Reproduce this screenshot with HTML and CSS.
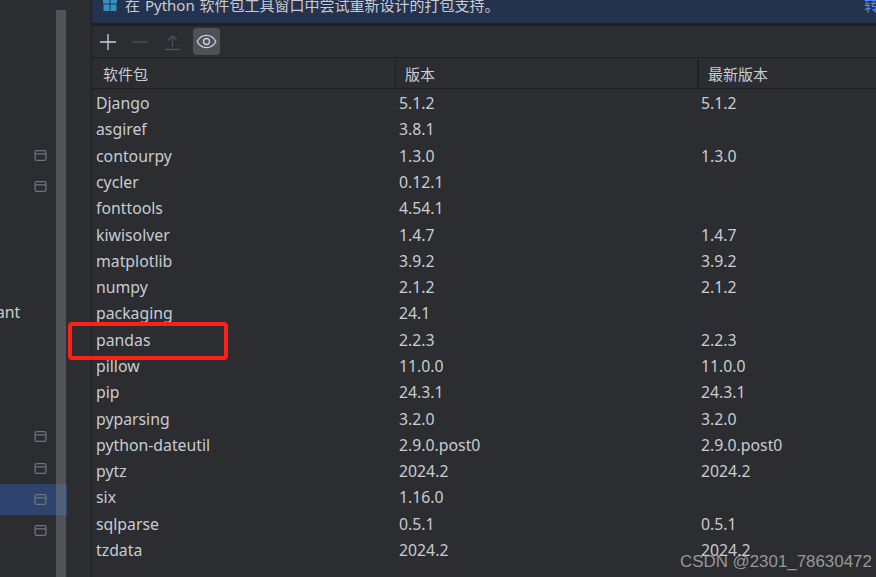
FILE: index.html
```html
<!DOCTYPE html>
<html lang="zh-CN">
<head>
<meta charset="utf-8">
<title>Python Packages</title>
<link rel="stylesheet" href="styles.css">
</head>
<body>
<div class="app">
  <aside class="side">
    <div class="side-list">
      <div class="side-row"><svg class="win" viewBox="0 0 12 12"><rect x="1" y="1.5" width="10" height="9" rx="1.5"/><path d="M1 4.5h10"/></svg></div>
      <div class="side-row"><svg class="win" viewBox="0 0 12 12"><rect x="1" y="1.5" width="10" height="9" rx="1.5"/><path d="M1 4.5h10"/></svg></div>
      <div class="side-row"></div>
      <div class="side-row"></div>
      <div class="side-row"></div>
      <div class="side-row"><span class="side-text">ant</span></div>
      <div class="side-row"></div>
      <div class="side-row"></div>
      <div class="side-row"></div>
      <div class="side-row"><svg class="win" viewBox="0 0 12 12"><rect x="1" y="1.5" width="10" height="9" rx="1.5"/><path d="M1 4.5h10"/></svg></div>
      <div class="side-row"><svg class="win" viewBox="0 0 12 12"><rect x="1" y="1.5" width="10" height="9" rx="1.5"/><path d="M1 4.5h10"/></svg></div>
      <div class="side-row selected"><svg class="win" viewBox="0 0 12 12"><rect x="1" y="1.5" width="10" height="9" rx="1.5"/><path d="M1 4.5h10"/></svg></div>
      <div class="side-row"><svg class="win" viewBox="0 0 12 12"><rect x="1" y="1.5" width="10" height="9" rx="1.5"/><path d="M1 4.5h10"/></svg></div>
    </div>
    <div class="side-scroll"></div>
  </aside>
  <main class="panel">
    <div class="banner">
      <svg class="gift" viewBox="0 0 16 12"><path d="M1 0h6.500v3.500H1zM8.500 0H15v3.500H8.500zM1.500 4.500h6V11h-6zM8.500 4.500h6V11h-6z"/></svg>
      <span class="banner-text">在 Python 软件包工具窗口中尝试重新设计的打包支持。</span>
      <span class="banner-link">转</span>
    </div>
    <div class="toolbar">
      <svg class="tool" viewBox="0 0 18 18"><path class="on" d="M9 1v16M1 9h16"/></svg>
      <svg class="tool" viewBox="0 0 18 18"><path class="off" d="M1 9h16"/></svg>
      <svg class="tool" viewBox="0 0 18 18"><path class="off" d="M2 16.500h15M9.500 14V3M5 7.500 9.500 3 14 7.500"/></svg>
      <span class="tool-active"><svg class="eye" viewBox="0 0 22 16"><path d="M1 8c2.500-4.500 6-6.500 10-6.500S18.500 3.500 21 8c-2.500 4.500-6 6.500-10 6.500S3.500 12.500 1 8z"/><circle cx="11" cy="8" r="3.200"/></svg></span>
    </div>
    <div class="head">
      <div class="hcell">软件包</div>
      <div class="hcell">版本</div>
      <div class="hcell">最新版本</div>
    </div>
    <div class="rows">
      <div class="row"><span>Django</span><span>5.1.2</span><span>5.1.2</span></div>
      <div class="row"><span>asgiref</span><span>3.8.1</span><span></span></div>
      <div class="row"><span>contourpy</span><span>1.3.0</span><span>1.3.0</span></div>
      <div class="row"><span>cycler</span><span>0.12.1</span><span></span></div>
      <div class="row"><span>fonttools</span><span>4.54.1</span><span></span></div>
      <div class="row"><span>kiwisolver</span><span>1.4.7</span><span>1.4.7</span></div>
      <div class="row"><span>matplotlib</span><span>3.9.2</span><span>3.9.2</span></div>
      <div class="row"><span>numpy</span><span>2.1.2</span><span>2.1.2</span></div>
      <div class="row"><span>packaging</span><span>24.1</span><span></span></div>
      <div class="row"><span>pandas</span><span>2.2.3</span><span>2.2.3</span></div>
      <div class="row"><span>pillow</span><span>11.0.0</span><span>11.0.0</span></div>
      <div class="row"><span>pip</span><span>24.3.1</span><span>24.3.1</span></div>
      <div class="row"><span>pyparsing</span><span>3.2.0</span><span>3.2.0</span></div>
      <div class="row"><span>python-dateutil</span><span>2.9.0.post0</span><span>2.9.0.post0</span></div>
      <div class="row"><span>pytz</span><span>2024.2</span><span>2024.2</span></div>
      <div class="row"><span>six</span><span>1.16.0</span><span></span></div>
      <div class="row"><span>sqlparse</span><span>0.5.1</span><span>0.5.1</span></div>
      <div class="row"><span>tzdata</span><span>2024.2</span><span>2024.2</span></div>
    </div>
  </main>
</div>
<div class="marker"></div>
<div class="watermark">CSDN @2301_78630472</div>
</body>
</html>
```
FILE: styles.css
```css
html, body {
  margin: 0;
  padding: 0;
  height: 100%;
  overflow: hidden;
  background: #2b2d30;
}
body {
  font-family: "Noto Sans", "Noto Sans CJK SC", sans-serif;
  font-size: 15.800px;
  color: #c9ccd2;
}
.app {
  display: flex;
  height: 577px;
  width: 876px;
}
.side {
  position: relative;
  width: 92px;
  flex: none;
  padding-top: 140px;
  box-sizing: border-box;
  border-right: 1px solid #1e1f22;
}
.side-list {
  display: flex;
  flex-direction: column;
  width: 67px;
}
.side-row {
  height: 31.250px;
  display: flex;
  align-items: center;
  justify-content: flex-end;
  padding-right: 20px;
  box-sizing: border-box;
  position: relative;
}
.side-row.selected {
  background: #2e436e;
}
.side-text {
  position: absolute;
  left: -4px;
  top: 5px;
  line-height: 22px;
}
.win {
  width: 13px;
  height: 13px;
  fill: none;
  stroke: #6f737a;
  stroke-width: 1.200;
  display: block;
}
.side-scroll {
  position: absolute;
  left: 56px;
  top: 10px;
  bottom: 0;
  width: 10px;
  background: rgba(120, 122, 128, 0.5);
}
.panel {
  flex: 1;
  min-width: 0;
  display: flex;
  flex-direction: column;
}
.banner {
  height: 23px;
  background: #25324d;
  display: flex;
  align-items: flex-start;
  overflow: hidden;
  position: relative;
  padding-left: 10px;
  border-bottom: 3px solid #1f2024;
}
.gift {
  width: 16px;
  height: 12px;
  fill: #3592c4;
  flex: none;
}
.banner-text {
  margin-left: 7px;
  margin-top: -6px;
  line-height: 22px;
  font-size: 15px;
  word-spacing: 1px;
  white-space: nowrap;
  color: #c9ccd2;
}
.banner-link {
  position: absolute;
  left: 772px;
  top: -6px;
  line-height: 22px;
  font-size: 15px;
  color: #548af7;
}
.toolbar {
  height: 31px;
  display: flex;
  align-items: center;
  padding-left: 7px;
  border-bottom: 1px solid #1e1f22;
}
.tool {
  width: 18px;
  height: 18px;
  fill: none;
  stroke-width: 1.300;
  margin-right: 14px;
  flex: none;
}
.tool .on {
  stroke: #ced0d6;
}
.tool .off {
  stroke: #4e5157;
}
.tool-active {
  width: 27px;
  height: 27px;
  background: #4e5157;
  border-radius: 4px;
  display: flex;
  align-items: center;
  justify-content: center;
  margin-left: -2px;
}
.eye {
  width: 21px;
  height: 15px;
  fill: none;
  stroke: #ced0d6;
  stroke-width: 1.400;
}
.head {
  height: 30px;
  display: grid;
  grid-template-columns: 304px 303px 1fr;
  border-bottom: 1px solid #1e1f22;
  align-items: center;
}
.hcell {
  padding-left: 11px;
  height: 28px;
  line-height: 31px;
  font-size: 15px;
  box-sizing: border-box;
}
.hcell:nth-child(1) {
  border-right: 1px solid #1e1f22;
}
.hcell:nth-child(2) {
  padding-left: 9px;
  border-right: 2px solid #1e1f22;
}
.hcell:nth-child(3) {
  padding-left: 9px;
}
.rows {
  display: flex;
  flex-direction: column;
  padding-top: 1px;
}
.row {
  height: 26.290px;
  display: grid;
  grid-template-columns: 303px 302px 1fr;
  align-items: center;
  padding-left: 4px;
  line-height: 26px;
  white-space: nowrap;
}
.marker {
  position: absolute;
  left: 68px;
  top: 322px;
  width: 160px;
  height: 38px;
  box-sizing: border-box;
  border: 4px solid #fb2117;
  border-radius: 4px;
}
.watermark {
  position: absolute;
  left: 680px;
  top: 551px;
  font-family: "Liberation Sans", sans-serif;
  font-size: 16.900px;
  line-height: 21px;
  color: rgba(200, 200, 200, 0.7);
  white-space: nowrap;
}
```
